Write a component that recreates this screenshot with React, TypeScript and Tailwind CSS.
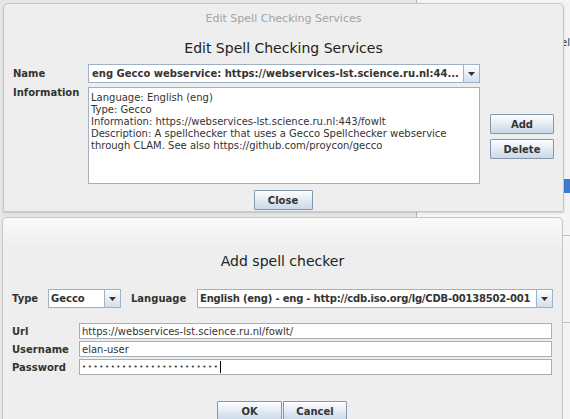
import React from 'react';

const font = { fontFamily: '"DejaVu Sans", "Liberation Sans", sans-serif' };

function Arrow() {
  return (
    <div className="w-[16px] h-full border-l border-[#9fb1c4] bg-gradient-to-b from-[#fbfdff] to-[#d3e0ee] flex items-center justify-center">
      <svg width="7" height="4" viewBox="0 0 7 4">
        <path d="M0 0 L7 0 L3.5 4 Z" fill="#333" />
      </svg>
    </div>
  );
}

function Combo({ text, className, textClass = '' }: { text: string; className: string; textClass?: string }) {
  return (
    <div className={`h-[19px] flex border border-[#9fb1c4] bg-white ${className}`}>
      <div className={`flex-1 min-w-0 px-[2px] flex items-center text-[10px] font-bold text-[#333] whitespace-nowrap overflow-hidden ${textClass}`}>
        {text}
      </div>
      <Arrow />
    </div>
  );
}

function Btn({ label, className }: { label: string; className: string }) {
  return (
    <div
      className={`h-[20px] border border-[#8597aa] rounded-[1px] bg-gradient-to-b from-[#fdfeff] to-[#c9d8e8] flex items-center justify-center text-[10px] font-bold text-[#333] ${className}`}
    >
      {label}
    </div>
  );
}

function Field({ children }: { children?: React.ReactNode }) {
  return (
    <div className="h-[16px] w-[473px] border border-[#a4afba] bg-white px-[2px] flex items-center text-[10px] text-[#333] whitespace-nowrap overflow-hidden">
      {children}
    </div>
  );
}

export default function App() {
  const info = [
    'Language: English (eng)',
    'Type: Gecco',
    'Information: https://webservices-lst.science.ru.nl:443/fowlt',
    'Description: A spellchecker that uses a Gecco Spellchecker webservice',
    'through CLAM. See also https://github.com/proycon/gecco',
  ];

  return (
    <div className="relative w-[570px] h-[419px] overflow-hidden bg-[#e4e4e4]" style={font}>
      {/* window behind the dialogs */}
      <div className="absolute inset-0 flex">
        <div className="w-[440px] h-full bg-[#e6e6e6] border-r border-[#b5b5b5]" />
        <div className="flex-1 h-full bg-[#f4f4f4] flex flex-col pl-[123px] text-[10px] text-[#333] leading-[12px]">
          <div className="h-[37px]" />
          <div className="h-[12px]">Model</div>
          <div className="h-[5px]" />
          <div className="h-[12px]">5</div>
          <div className="h-[55px]" />
          <div className="h-[12px]">5</div>
          <div className="h-[18px]" />
          <div className="h-[12px]">5</div>
          <div className="h-[4px]" />
          <div className="h-[12px]">o</div>
          <div className="h-[14px] bg-[#3d7bd0] text-white leading-[14px]">o</div>
          <div className="h-[44px] border-b border-[#c2c2c2]" />
          <div className="h-[8px]" />
          <div className="h-[12px]">t</div>
          <div className="h-[5px]" />
          <div className="h-[12px] text-[#888]">4</div>
          <div className="h-[50px] border-b border-[#c2c2c2]" />
          <div className="h-[14px]" />
          <div className="h-[12px] text-[#888]">e</div>
          <div className="h-[22px]" />
          <div className="h-[12px]">n</div>
          <div className="h-[8px]" />
          <div className="h-[12px]">c</div>
          <div className="h-[4px]" />
          <div className="h-[12px]">n</div>
        </div>
      </div>

      {/* Edit Spell Checking Services */}
      <div className="absolute left-[3px] top-[3px] w-[561px] h-[209px] rounded-t-[5px] border border-[#c6c6c6] bg-[#eeeeee] shadow-[0_1px_2px_rgba(0,0,0,0.15)] flex flex-col">
        <div className="h-[30px] flex items-center justify-center text-[11px] text-[#a3a3a3] pt-[1px]">
          Edit Spell Checking Services
        </div>
        <div className="h-[16px] mt-[6px] flex items-center justify-center text-[14px] text-[#222]">
          Edit Spell Checking Services
        </div>
        <div className="flex mt-[8px] pl-[9px]">
          <div className="flex flex-col">
            <div className="flex items-center">
              <div className="w-[75px] text-[10px] font-bold text-[#333]">Name</div>
              <Combo className="w-[392px]" textClass="px-[3px]" text="eng Gecco webservice: https://webservices-lst.science.ru.nl:44..." />
            </div>
            <div className="flex mt-[4px]">
              <div className="w-[75px] text-[10px] font-bold text-[#333] leading-[12px]">Information</div>
              <div className="w-[392px] h-[97px] border border-[#a4afba] bg-white px-[2px] pt-[4px] text-[10px] leading-[12px] text-[#333] whitespace-nowrap overflow-hidden">
                {info.map((l) => (
                  <div key={l}>{l}</div>
                ))}
              </div>
            </div>
          </div>
          <div className="flex flex-col ml-[10px] pt-[50px] gap-[5px]">
            <Btn label="Add" className="w-[64px]" />
            <Btn label="Delete" className="w-[64px]" />
          </div>
        </div>
        <div className="flex justify-center mt-[6px] pr-[1px]">
          <Btn label="Close" className="w-[59px]" />
        </div>
      </div>

      {/* Add spell checker */}
      <div className="absolute left-[2px] top-[217px] w-[561px] h-[220px] rounded-t-[5px] border border-[#c6c6c6] bg-gradient-to-b from-[#fafafa] to-[#eeeeee] to-[30px] flex flex-col">
        <div className="h-[30px]" />
        <div className="h-[16px] mt-[5px] flex items-center justify-center text-[14px] text-[#222]">
          Add spell checker
        </div>
        <div className="flex items-center mt-[20px] pl-[9px]">
          <div className="w-[36px] text-[10px] font-bold text-[#333]">Type</div>
          <Combo className="w-[73px]" text="Gecco" />
          <div className="w-[66px] ml-[10px] text-[10px] font-bold text-[#333]">Language</div>
          <Combo className="w-[356px]" textClass="tracking-[-0.2px]" text="English (eng) - eng - http://cdb.iso.org/lg/CDB-00138502-001" />
        </div>
        <div className="flex flex-col mt-[15px] pl-[9px] gap-[2px]">
          <div className="flex items-center">
            <div className="w-[67px] text-[10px] font-bold text-[#333]">Url</div>
            <Field>https://webservices-lst.science.ru.nl/fowlt/</Field>
          </div>
          <div className="flex items-center">
            <div className="w-[67px] text-[10px] font-bold text-[#333]">Username</div>
            <Field>elan-user</Field>
          </div>
          <div className="flex items-center">
            <div className="w-[67px] text-[10px] font-bold text-[#333]">Password</div>
            <Field>
              <span className="text-[7px] tracking-[1.6px] text-[#333]">
                {'•'.repeat(24)}
              </span>
              <span className="w-[1px] h-[12px] bg-black" />
            </Field>
          </div>
        </div>
        <div className="flex justify-center mt-[26px] gap-[1px] pr-[1px]">
          <Btn label="OK" className="w-[65px]" />
          <Btn label="Cancel" className="w-[64px]" />
        </div>
      </div>
    </div>
  );
}
